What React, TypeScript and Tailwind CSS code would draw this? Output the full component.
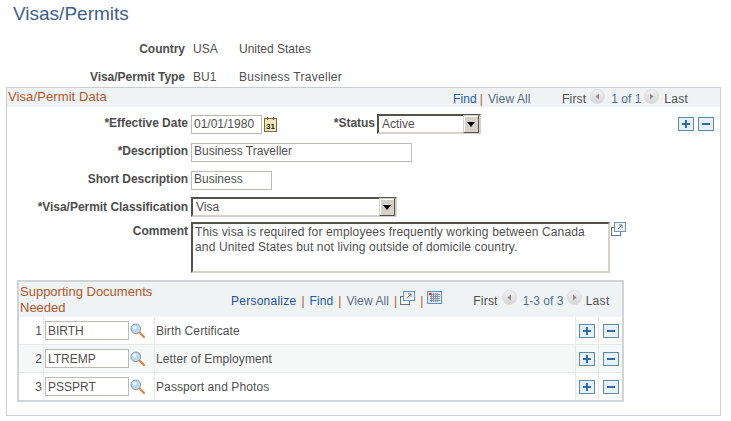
import type { ReactNode } from "react";

const docs = [
  { n: 1, code: "BIRTH", descr: "Birth Certificate", bg: "bg-white" },
  { n: 2, code: "LTREMP", descr: "Letter of Employment", bg: "bg-[#f6f7f7]" },
  { n: 3, code: "PSSPRT", descr: "Passport and Photos", bg: "bg-white" },
];

function PlusBtn() {
  return (
    <svg width="16" height="14" viewBox="0 0 16 14" className="block">
      <rect x="0.5" y="0.5" width="15" height="13" fill="#eaf1f5" stroke="#5b8aa6" />
      <path d="M8 3v8M4 7h8" stroke="#2f6db0" strokeWidth="2" />
    </svg>
  );
}

function MinusBtn() {
  return (
    <svg width="16" height="14" viewBox="0 0 16 14" className="block">
      <rect x="0.5" y="0.5" width="15" height="13" fill="#eaf1f5" stroke="#5b8aa6" />
      <path d="M4 7h8" stroke="#2f6db0" strokeWidth="2" />
    </svg>
  );
}

function NavBtn({ dir }: { dir: "l" | "r" }) {
  return (
    <svg width="15" height="15" viewBox="0 0 15 15" className="block">
      <defs>
        <linearGradient id="navFill" x1="0" y1="0" x2="0" y2="1">
          <stop offset="0" stopColor="#f4f4f4" />
          <stop offset="1" stopColor="#d4d4d4" />
        </linearGradient>
      </defs>
      <circle cx="7.5" cy="7.5" r="7" fill="url(#navFill)" stroke="#dcdcdc" />
      <path d={dir === "l" ? "M9 4.5v6l-3.5-3z" : "M6 4.5v6l3.5-3z"} fill="#8c8c8c" />
    </svg>
  );
}

function PopupIcon() {
  return (
    <svg width="15" height="14" viewBox="0 0 15 14" className="block">
      <rect x="0.5" y="5.5" width="9" height="8" fill="#fff" stroke="#67727c" />
      <rect x="3.5" y="0.5" width="11" height="9" fill="#eef3f8" stroke="#6f94bd" />
      <path d="M7 7l4-4M8 3h3v3" stroke="#67727c" fill="none" />
    </svg>
  );
}

function GridIcon() {
  return (
    <svg width="15" height="13" viewBox="0 0 15 13" className="block">
      <rect x="0.5" y="0.5" width="14" height="12" fill="#dfe7f2" stroke="#5f8fc9" />
      <path d="M3 3.5h10M3 5.5h10M3 7.5h10M3 9.5h10M4.5 2v9M6.5 2v9M8.5 2v9M10.5 2v9" stroke="#8b96a3" strokeWidth="1" />
      <rect x="2" y="2" width="2" height="2" fill="#e8141c" />
    </svg>
  );
}

function CalIcon() {
  return (
    <svg width="13" height="15" viewBox="0 0 13 15" className="block">
      <rect x="0.5" y="1.5" width="12" height="13" fill="#f3e8b8" stroke="#7d6a3a" />
      <path d="M3.5 0v3M9.5 0v3" stroke="#5c4e2a" />
      <text x="6.5" y="11.5" textAnchor="middle" fontSize="8" fontWeight="700" fill="#222">31</text>
    </svg>
  );
}

function LensIcon() {
  return (
    <svg width="15" height="15" viewBox="0 0 15 15" className="block">
      <path d="M9 9l5 5" stroke="#d8894a" strokeWidth="2.4" strokeLinecap="round" />
      <circle cx="5.8" cy="5.8" r="4.8" fill="#bcd8ee" stroke="#7f98ae" />
      <circle cx="4.6" cy="4.4" r="1.8" fill="#eef7fd" />
    </svg>
  );
}

function Arrow() {
  return (
    <span className="flex h-[18px] w-4 items-center justify-center border border-[#55524c] border-t-[#d6d2ca] border-l-[#d6d2ca] bg-[#d6d2ca] shadow-[inset_1px_1px_0_#fff]">
      <svg width="8" height="5" viewBox="0 0 8 5">
        <path d="M0 0h8L4 5z" fill="#000" />
      </svg>
    </span>
  );
}

function Select({ value, className }: { value: string; className: string }) {
  return (
    <div className={`flex h-5 items-center justify-between border-2 border-[#d6d2ca] border-t-[#55524c] border-l-[#55524c] bg-white pl-[3px] ${className}`}>
      <span>{value}</span>
      <Arrow />
    </div>
  );
}

function Input({ value, className }: { value: string; className: string }) {
  return (
    <div className={`flex h-[19px] items-center border border-[#bdbab5] bg-white pl-[2px] ${className}`}>
      {value}
    </div>
  );
}

function Label({ children, className = "w-[182px] pr-[1px]" }: { children: ReactNode; className?: string }) {
  return <div className={`shrink-0 text-right font-bold tracking-[-0.03px] text-[#4d4d4d] ${className}`}>{children}</div>;
}

function Sep({ className = "" }: { className?: string }) {
  return <span className={`text-[#b5562a] ${className}`}>|</span>;
}

export default function App() {
  return (
    <div className="h-[421px] w-[731px] overflow-hidden bg-white font-['Liberation_Sans',Arial,sans-serif] text-[12px] leading-[14px] text-[#505050]">
      <h1 className="pl-[13px] pt-[3px] text-[19px] leading-[22px] text-[#3f5f8a]">Visas/Permits</h1>

      <div className="mt-[17px] flex h-[14px] items-center">
        <Label className="w-[185px]">Country</Label>
        <span className="ml-2 w-[46px]">USA</span>
        <span>United States</span>
      </div>
      <div className="mt-[14px] flex h-[14px] items-center">
        <Label className="w-[185px]">Visa/Permit Type</Label>
        <span className="ml-2 w-[46px]">BU1</span>
        <span className="tracking-[0.28px]">Business Traveller</span>
      </div>

      <div className="ml-[6px] mt-[3px] h-[329px] w-[715px] border border-[#c9cdd0]">
        <div className="flex h-[19px] items-start bg-[#eff3f4] pl-[1px]">
          <span className="mt-[2px] w-[445px] text-[13px] tracking-[0.1px] text-[#b5562a]">Visa/Permit Data</span>
          <span className="mt-[4px] flex w-[109px] tracking-[0.1px]">
            <span className="text-[#1f5ea8]">Find</span>
            <Sep className="ml-[3px]" />
            <span className="ml-[5px] text-[#5a6b80]">View All</span>
          </span>
          <span className="mt-[4px] tracking-[0.2px]">First</span>
          <span className="ml-[4px] mt-[1px]"><NavBtn dir="l" /></span>
          <span className="ml-[6px] mt-[4px] w-[28px] whitespace-nowrap text-[#4f6f96]">1 of 1</span>
          <span className="ml-[5px] mt-[1px]"><NavBtn dir="r" /></span>
          <span className="ml-[5px] mt-[4px] tracking-[0.3px]">Last</span>
        </div>

        <div className="mt-[7px] flex h-[20px] items-center">
          <Label className="w-[182px] pb-[2px] pr-[1px]">*Effective Date</Label>
          <Input value="01/01/1980" className="ml-[2px] w-[71px]" />
          <span className="ml-[2px]"><CalIcon /></span>
          <Label className="w-[98px] pb-[2px]">*Status</Label>
          <Select value="Active" className="ml-[2px] w-[104px]" />
          <span className="ml-[197px]"><PlusBtn /></span>
          <span className="ml-[4px]"><MinusBtn /></span>
        </div>

        <div className="mt-[8px] flex h-[20px] items-center">
          <Label className="w-[182px] pb-[2px] pr-[1px]">*Description</Label>
          <Input value="Business Traveller" className="ml-[2px] w-[221px] pb-[2px]" />
        </div>

        <div className="mt-[8px] flex h-[20px] items-center">
          <Label className="w-[182px] pb-[2px] pr-[1px]">Short Description</Label>
          <Input value="Business" className="ml-[2px] w-[81px] pb-[2px]" />
        </div>

        <div className="mt-[7px] flex h-[20px] items-center">
          <Label>*Visa/Permit Classification</Label>
          <Select value="Visa" className="ml-[2px] w-[206px]" />
        </div>

        <div className="mt-[5px] flex items-start">
          <Label className="w-[182px] pr-[1px] pt-[2px]">Comment</Label>
          <div className="ml-[2px] h-[51px] w-[419px] border-2 border-[#d6d2ca] border-t-[#55524c] border-l-[#55524c] bg-white pl-[2px] pt-[1px] leading-[15px] tracking-[0.14px]">
            This visa is required for employees frequently working between Canada
            <br />
            and United States but not living outside of domicile country.
          </div>
          <span className="ml-[1px]"><PopupIcon /></span>
        </div>

        <div className="ml-[10px] mt-[7px] w-[607px] border-2 border-[#d0d4d7]">
          <div className="flex h-[35px] items-start bg-[#eff3f4]">
            <span className="mt-[2px] w-[212px] pl-[1px] text-[13px] leading-[16px] text-[#b5562a]">
              Supporting Documents
              <br />
              Needed
            </span>
            <span className="mt-[12px] tracking-[0.25px] text-[#1f4f9c]">Personalize</span>
            <Sep className="ml-[5px] mt-[12px]" />
            <span className="ml-[5px] mt-[12px] tracking-[0.1px] text-[#1f5ea8]">Find</span>
            <Sep className="ml-[5px] mt-[12px]" />
            <span className="ml-[5px] mt-[12px] tracking-[0.1px] text-[#5a6b80]">View All</span>
            <Sep className="ml-[5px] mt-[12px]" />
            <span className="ml-[3px] mt-[9px]"><PopupIcon /></span>
            <Sep className="ml-[5px] mt-[12px]" />
            <span className="ml-[4px] mt-[9px]"><GridIcon /></span>
            <span className="ml-[31px] mt-[12px] tracking-[0.2px]">First</span>
            <span className="ml-[4px] mt-[8px]"><NavBtn dir="l" /></span>
            <span className="ml-[6px] mt-[12px] w-[40px] whitespace-nowrap text-[#4f6f96]">1-3 of 3</span>
            <span className="ml-[4px] mt-[8px]"><NavBtn dir="r" /></span>
            <span className="ml-[4px] mt-[12px] tracking-[0.3px]">Last</span>
          </div>
          {docs.map((d) => (
            <div key={d.n} className={`flex h-[28px] items-center border-b border-[#e6e8e9] last:h-[27px] last:border-b-0 ${d.bg}`}>
              <div className="flex h-full w-[25px] items-center justify-end border-r border-[#e6e8e9] pr-[1px]">{d.n}</div>
              <div className="flex h-full w-[111px] items-center gap-[1px] border-r border-[#e6e8e9] pl-[1px]">
                <Input value={d.code} className="w-[84px]" />
                <LensIcon />
              </div>
              <div className="flex h-full w-[421px] items-center border-r border-[#e6e8e9] pl-[1px] tracking-[0.1px]">{d.descr}</div>
              <div className="flex h-full w-[23px] items-center justify-center border-r border-[#e6e8e9]"><PlusBtn /></div>
              <div className="flex h-full w-[23px] items-center justify-center"><MinusBtn /></div>
            </div>
          ))}
        </div>
      </div>
    </div>
  );
}
